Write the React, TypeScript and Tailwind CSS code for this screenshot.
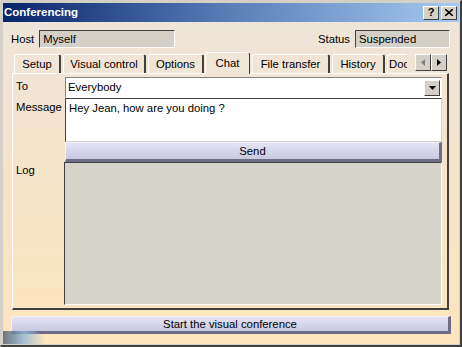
import React from 'react';

const font = { fontFamily: '"Liberation Sans", Arial, sans-serif' };

const tabs = ['Setup', 'Visual control', 'Options', 'Chat', 'File transfer', 'History', 'Doc'];
const tabWidths = [47, 83, 56, 45, 78, 53, 20];

const App: React.FC = () => {
  return (
    <div className="w-[462px] h-[347px] overflow-hidden bg-[#d4d0c8] text-[11.3px] leading-[13px] text-black" style={font}>
      <div className="w-full h-full border-t border-l border-t-[#d4d0c8] border-l-[#d4d0c8] border-b-2 border-r-2 border-b-[#404040] border-r-[#404040] flex flex-col p-[2px] pr-[1px] pb-[1px]">
        {/* Title bar */}
        <div className="h-[19px] shrink-0 flex items-center justify-between pl-[1px] pr-[2px] bg-gradient-to-r from-[#0a246a] via-[#5a7fb8] to-[#a6caf0]">
          <span className="text-white font-bold text-[11.5px] leading-none">Conferencing</span>
          <div className="flex gap-[2px]">
            <div className="w-[16px] h-[14px] bg-[#d4d0c8] border border-t-white border-l-white border-b-[#404040] border-r-[#404040] flex items-center justify-center text-[11px] font-bold leading-none">?</div>
            <div className="w-[16px] h-[14px] bg-[#d4d0c8] border border-t-white border-l-white border-b-[#404040] border-r-[#404040] flex items-center justify-center">
              <svg width="8" height="7" viewBox="0 0 8 7">
                <path d="M0 0 L8 7 M8 0 L0 7" stroke="black" strokeWidth="1.6" />
              </svg>
            </div>
          </div>
        </div>

        {/* Body */}
        <div className="flex-1 flex flex-col bg-gradient-to-b from-[#eee5da] via-[#f6e4c8] to-[#fde5bd] relative">
          {/* Host / Status row */}
          <div className="flex items-center justify-between pt-[8px] pl-[8px] pr-[9px]">
            <div className="flex items-center gap-[5px]">
              <span>Host</span>
              <div className="w-[136px] h-[18px] bg-[#d4d0c8] border border-t-[#404040] border-l-[#404040] border-b-white border-r-white flex items-center pl-[3px]">Myself</div>
            </div>
            <div className="flex items-center gap-[5px]">
              <span>Status</span>
              <div className="w-[95px] h-[18px] bg-[#d4d0c8] border border-t-[#404040] border-l-[#404040] border-b-white border-r-white flex items-center pl-[3px]">Suspended</div>
            </div>
          </div>

          {/* Tabs */}
          <div className="flex items-end pl-[9px] pr-[12px] mt-[3px] h-[22px]">
            {tabs.map((t, i) => {
              const sel = t === 'Chat';
              const last = i === tabs.length - 1;
              return (
                <div
                  key={t}
                  style={{ width: tabWidths[i] }}
                  className={
                    sel
                      ? 'h-[22px] -mb-[1px] ml-[1px] relative z-10 bg-[#f0e6d8] border-t border-l border-r border-t-white border-l-white border-r-[#404040] rounded-t-[3px] flex items-center justify-center overflow-hidden'
                      : last
                        ? 'h-[19px] ml-[2px] border-t border-l border-t-white border-l-white rounded-tl-[3px] flex items-center justify-start pl-[1px] overflow-hidden whitespace-nowrap'
                        : 'h-[19px] ml-[2px] border-t border-l border-r-2 border-t-white border-l-white border-r-[#404040] rounded-t-[3px] flex items-center justify-center overflow-hidden whitespace-nowrap'
                  }
                >
                  {t}
                </div>
              );
            })}
            <div className="flex-1" />
            <div className="flex mb-[2px]">
              <div className="w-[16px] h-[17px] bg-[#d4d0c8] border border-t-white border-l-white border-b-[#404040] border-r-[#404040] flex items-center justify-center">
                <svg width="4" height="7" viewBox="0 0 4 7"><path d="M4 0 L0 3.5 L4 7 Z" fill="#808080" /></svg>
              </div>
              <div className="w-[16px] h-[17px] bg-[#d4d0c8] border border-t-white border-l-white border-b-[#404040] border-r-[#404040] flex items-center justify-center">
                <svg width="4" height="7" viewBox="0 0 4 7"><path d="M0 0 L4 3.5 L0 7 Z" fill="black" /></svg>
              </div>
            </div>
          </div>

          {/* Tab panel */}
          <div className="ml-[9px] mr-[10px] h-[237px] border-t border-l border-t-white border-l-white border-r-2 border-b-2 border-r-[#404040] border-b-[#404040] flex flex-col pt-[3px] pl-[3px] pr-[5px] pb-[3px]">
            <div className="flex items-start">
              <span className="w-[49px] pt-[3px]">To</span>
              <div className="flex-1 h-[21px] bg-white border border-t-[#808080] border-l-[#808080] border-b-white border-r-white flex items-center justify-between pl-[2px] pr-[1px]">
                <span>Everybody</span>
                <div className="w-[16px] h-[16px] bg-[#d4d0c8] border border-t-white border-l-white border-b-[#404040] border-r-[#404040] flex items-center justify-center">
                  <svg width="7" height="4" viewBox="0 0 7 4"><path d="M0 0 L7 0 L3.5 4 Z" fill="black" /></svg>
                </div>
              </div>
            </div>
            <div className="flex items-start">
              <span className="w-[49px] pt-[3px]">Message</span>
              <div className="flex-1 h-[44px] bg-white border border-t-[#404040] border-l-[#404040] border-b-[#d4d0c8] border-r-[#d4d0c8] pl-[3px] pt-[3px]">
                Hey Jean, how are you doing ?
              </div>
            </div>
            <div className="flex">
              <span className="w-[49px]" />
              <div className="flex-1 h-[20px] bg-gradient-to-b from-[#e4e4f4] to-[#c9c9e2] border-t border-l border-t-[#f0f0fa] border-l-[#f0f0fa] border-b-[3px] border-r-[3px] border-b-[#6d6d86] border-r-[#6d6d86] flex items-center justify-center">
                Send
              </div>
            </div>
            <div className="flex flex-1 items-stretch">
              <span className="w-[48px] pt-[2px]">Log</span>
              <div className="flex-1 bg-[#d6d3cb] border border-t-[#404040] border-l-[#404040] border-b-white border-r-white" />
            </div>
          </div>

          {/* Start button */}
          <div className="ml-[8px] mr-[8px] mt-[6px] h-[18px] bg-gradient-to-b from-[#e4e4f4] to-[#c9c9e2] border-t border-l border-t-[#f0f0fa] border-l-[#f0f0fa] border-b-[3px] border-r-[3px] border-b-[#6d6d86] border-r-[#6d6d86] flex items-center justify-center">
            Start the visual conference
          </div>

          {/* decorative swoosh bottom-left */}
          <div className="absolute left-0 bottom-0 w-[42px] h-[13px] bg-gradient-to-r from-[#4d5a70] via-[#8fb7d6] to-transparent rounded-tr-[20px] opacity-80" />
        </div>
      </div>
    </div>
  );
};

export default App;
